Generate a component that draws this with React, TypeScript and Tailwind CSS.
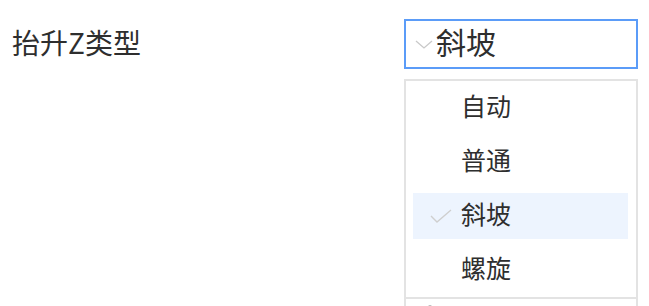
import { useState } from "react";

const options = ["自动", "普通", "斜坡", "螺旋"];

function Chevron() {
  return (
    <svg width="18" height="9" viewBox="0 0 18 9" fill="none" className="shrink-0">
      <path d="M1 1L9 8L17 1" stroke="#c9c9c9" strokeWidth="1.3" />
    </svg>
  );
}

function Check() {
  return (
    <svg width="22" height="14" viewBox="0 0 22 14" fill="none" className="shrink-0">
      <path d="M1 7L7 13L21 1" stroke="#cfcfcf" strokeWidth="1.4" />
    </svg>
  );
}

export default function App() {
  const [value] = useState("斜坡");

  return (
    <div
      className="w-[649px] h-[306px] overflow-hidden bg-white flex items-start text-[#2e2e2e]"
      style={{ fontFamily: '"Noto Sans CJK SC", "Noto Sans", sans-serif' }}
    >
      {/* Label */}
      <div className="pl-[12px] pt-[19px] h-[69px] flex items-center">
        <span className="text-[28px] leading-none mb-[4px]">抬升Z类型</span>
      </div>

      {/* Select */}
      <div className="ml-auto mr-[11px] w-[234px] pt-[19px] flex flex-col">
        <div className="shrink-0 h-[50px] border-2 border-[#5b9cf8] flex items-center pl-[9px] gap-[3px]">
          <Chevron />
          <span className="text-[30px] leading-none mb-[6px]">{value}</span>
        </div>

        <div className="shrink-0 mt-[10px] border-2 border-b-0 border-[#e3e3e3] flex flex-col">
          {options.map((o) => (
            <div key={o} className="shrink-0 h-[54px] py-[4px] pl-[7px] pr-[8px]">
              <div
                className={
                  "h-full flex items-center " + (o === value ? "bg-[#edf4fe]" : "")
                }
              >
                <div className="w-[48px] pl-[17px] flex items-center">
                  {o === value && <Check />}
                </div>
                <span className="text-[25px] leading-none mb-[5px]">{o}</span>
              </div>
            </div>
          ))}
          <div className="shrink-0 border-t-2 border-[#e3e3e3] h-[20px] pl-[22px] pt-[6px]">
            <div className="w-[4px] h-[4px] rounded-full bg-[#bbb]" />
          </div>
        </div>
      </div>
    </div>
  );
}
